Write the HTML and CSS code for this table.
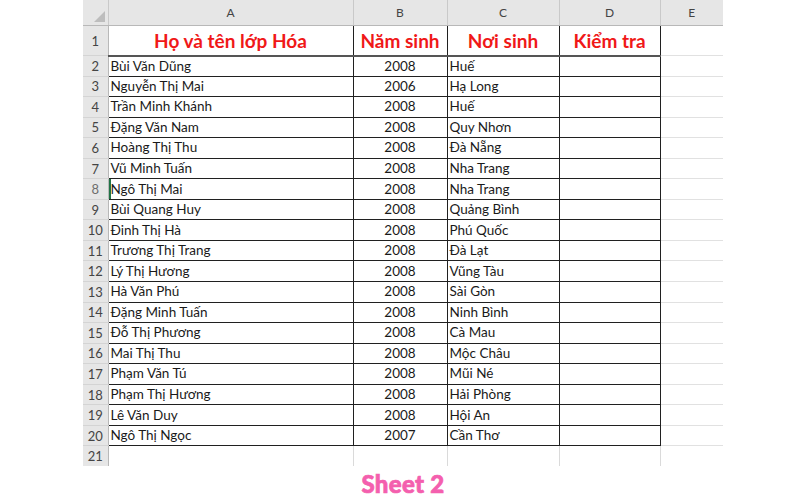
FILE: index.html
```html
<!DOCTYPE html>
<html lang="vi">
<head>
<meta charset="utf-8">
<title>Sheet 2</title>
<link rel="stylesheet" href="styles.css">
</head>
<body>
<div class="page">
  <table class="sheet">
    <colgroup>
      <col class="c-rh"><col class="c-a"><col class="c-b"><col class="c-c"><col class="c-d"><col class="c-e">
    </colgroup>
    <thead>
      <tr class="colhead">
        <th class="corner"><span class="tri"></span></th>
        <th>A</th><th>B</th><th>C</th><th>D</th><th class="e">E</th>
      </tr>
    </thead>
    <tbody>
      <tr class="r1">
        <th class="rh">1</th>
        <td class="t">Họ và tên lớp Hóa</td><td class="t">Năm sinh</td><td class="t">Nơi sinh</td><td class="t">Kiểm tra</td><td class="e"></td>
      </tr>
      <tr><th class="rh">2</th><td>Bùi Văn Dũng</td><td class="y">2008</td><td>Huế</td><td></td><td class="e"></td></tr>
      <tr><th class="rh">3</th><td>Nguyễn Thị Mai</td><td class="y">2006</td><td>Hạ Long</td><td></td><td class="e"></td></tr>
      <tr><th class="rh">4</th><td>Trần Minh Khánh</td><td class="y">2008</td><td>Huế</td><td></td><td class="e"></td></tr>
      <tr><th class="rh">5</th><td>Đặng Văn Nam</td><td class="y">2008</td><td>Quy Nhơn</td><td></td><td class="e"></td></tr>
      <tr><th class="rh">6</th><td>Hoàng Thị Thu</td><td class="y">2008</td><td>Đà Nẵng</td><td></td><td class="e"></td></tr>
      <tr><th class="rh">7</th><td>Vũ Minh Tuấn</td><td class="y">2008</td><td>Nha Trang</td><td></td><td class="e"></td></tr>
      <tr><th class="rh sel">8</th><td class="active">Ngô Thị Mai</td><td class="y">2008</td><td>Nha Trang</td><td></td><td class="e"></td></tr>
      <tr><th class="rh">9</th><td>Bùi Quang Huy</td><td class="y">2008</td><td>Quảng Bình</td><td></td><td class="e"></td></tr>
      <tr><th class="rh">10</th><td>Đinh Thị Hà</td><td class="y">2008</td><td>Phú Quốc</td><td></td><td class="e"></td></tr>
      <tr><th class="rh">11</th><td>Trương Thị Trang</td><td class="y">2008</td><td>Đà Lạt</td><td></td><td class="e"></td></tr>
      <tr><th class="rh">12</th><td>Lý Thị Hương</td><td class="y">2008</td><td>Vũng Tàu</td><td></td><td class="e"></td></tr>
      <tr><th class="rh">13</th><td>Hà Văn Phú</td><td class="y">2008</td><td>Sài Gòn</td><td></td><td class="e"></td></tr>
      <tr><th class="rh">14</th><td>Đặng Minh Tuấn</td><td class="y">2008</td><td>Ninh Bình</td><td></td><td class="e"></td></tr>
      <tr><th class="rh">15</th><td>Đỗ Thị Phương</td><td class="y">2008</td><td>Cà Mau</td><td></td><td class="e"></td></tr>
      <tr><th class="rh">16</th><td>Mai Thị Thu</td><td class="y">2008</td><td>Mộc Châu</td><td></td><td class="e"></td></tr>
      <tr><th class="rh">17</th><td>Phạm Văn Tú</td><td class="y">2008</td><td>Mũi Né</td><td></td><td class="e"></td></tr>
      <tr><th class="rh">18</th><td>Phạm Thị Hương</td><td class="y">2008</td><td>Hải Phòng</td><td></td><td class="e"></td></tr>
      <tr><th class="rh">19</th><td>Lê Văn Duy</td><td class="y">2008</td><td>Hội An</td><td></td><td class="e"></td></tr>
      <tr><th class="rh">20</th><td>Ngô Thị Ngọc</td><td class="y">2007</td><td>Cần Thơ</td><td></td><td class="e"></td></tr>
      <tr class="r21"><th class="rh">21</th><td></td><td></td><td></td><td></td><td class="e"></td></tr>
    </tbody>
  </table>
  <div class="caption">Sheet 2</div>
</div>
</body>
</html>
```

FILE: styles.css
```css
html, body {
  margin: 0;
  padding: 0;
  background: #ffffff;
}

.page {
  width: 790px;
  height: 500px;
  overflow: hidden;
  padding-left: 83px;
  box-sizing: border-box;
  font-family: Lato, "Open Sans", sans-serif;
}

.sheet {
  border-collapse: collapse;
  table-layout: fixed;
  width: 640px;
}

.c-rh { width: 25px; }
.c-a { width: 245px; }
.c-b { width: 94px; }
.c-c { width: 112px; }
.c-d { width: 101px; }
.c-e { width: 63px; }

.colhead th {
  height: 25px;
  padding: 0;
  background: #e6e6e6;
  color: #444444;
  font-weight: normal;
  font-size: 12px;
  border-left: 1px solid #c9c9c9;
  border-bottom: 1px solid #b8b8b8;
  text-align: center;
  vertical-align: middle;
}

.colhead th.corner {
  border-left: none;
  position: relative;
}

.tri {
  position: absolute;
  right: 3px;
  bottom: 3px;
  width: 0;
  height: 0;
  border-style: solid;
  border-width: 0 0 11px 11px;
  border-color: transparent transparent #bdbdbd transparent;
}

.rh {
  padding: 0;
  background: #e6e6e6;
  color: #444444;
  font-weight: normal;
  font-size: 13px;
  text-align: center;
  border-bottom: 1px solid #d4d4d4;
  border-right: 1px solid #b8b8b8;
}

.rh.sel {
  color: #6d6d6d;
}

td {
  padding: 0 2px;
  font-size: 13.5px;
  color: #1a1a1a;
  border: 1px solid #202020;
  white-space: nowrap;
  overflow: hidden;
  vertical-align: middle;
  line-height: 17px;
}

tbody tr {
  height: 20.55px;
}

.r1 {
  height: 30px;
}

.r1 td.t {
  color: #f01818;
  font-weight: bold;
  font-size: 19px;
  text-align: center;
  border-bottom: 2px solid #555555;
}

td.y {
  text-align: center;
}

td.active {
  box-shadow: inset 2px 0 0 #217346;
}

td.e {
  border: none;
  border-left: 1px solid #202020;
  border-bottom: 1px solid #e1e1e1;
}

.r1 td.e {
  border-bottom: 1px solid #e1e1e1;
}

.r21 td {
  border: none;
  border-left: 1px solid #dadada;
  border-top: 1px solid #202020;
}

.r21 td.e {
  border-top: 1px solid #e1e1e1;
  border-left: 1px solid #dadada;
}

.r21 th.rh {
  border-bottom: none;
}

.caption {
  width: 640px;
  margin-top: 3px;
  text-align: center;
  font-family: Lato, "Open Sans", sans-serif;
  font-weight: 900;
  font-size: 24px;
  color: #f45fae;
  -webkit-text-stroke: 0.7px #f45fae;
  letter-spacing: 0.3px;
}
```
